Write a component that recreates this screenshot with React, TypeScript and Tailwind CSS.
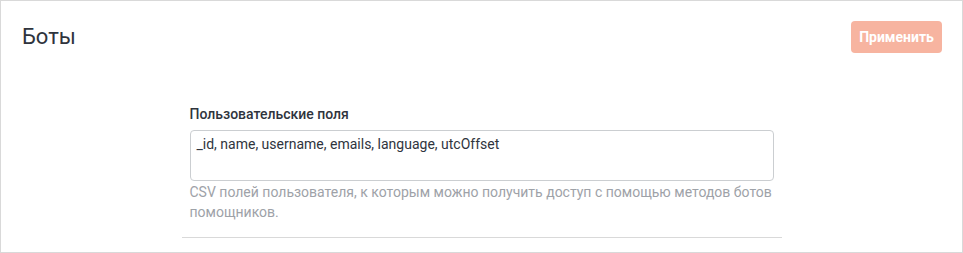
import React, { useState } from 'react';

const App: React.FC = () => {
  const [fields, setFields] = useState('_id, name, username, emails, language, utcOffset');

  return (
    <div
      className="w-[963px] h-[253px] border border-[#d9d9d9] bg-white overflow-hidden flex flex-col"
      style={{ fontFamily: 'Roboto, "Noto Sans", sans-serif' }}
    >
      {/* Header */}
      <div className="h-[71px] flex items-center justify-between pl-[21px] pr-[20px] shrink-0">
        <h1 className="text-[22px] leading-8 text-[#2f343d] font-normal">Боты</h1>
        <button
          disabled
          className="h-8 w-[91px] rounded bg-[#f7b4a0] text-white text-sm font-bold"
        >
          Применить
        </button>
      </div>

      {/* Content */}
      <div className="w-[600px] mx-auto pt-[32px]">
        <div className="px-2">
          <label className="block text-sm leading-5 font-medium text-[#2f343d] mb-[6px]">
            Пользовательские поля
          </label>
          <textarea
            value={fields}
            onChange={e => setFields(e.target.value)}
            className="block w-[584px] h-[51px] resize-none rounded border border-[#cbced1] px-[6px] pt-[3px] text-sm leading-5 text-[#2f343d] outline-none"
          />
          <p className="text-sm leading-5 text-[#9ea2a8] mt-[1px]">
            CSV полей пользователя, к которым можно получить доступ с помощью методов ботов помощников.
          </p>
        </div>
        <div className="mt-[15px] border-t border-[#d9d9d9]" />
      </div>
    </div>
  );
};

export default App;
